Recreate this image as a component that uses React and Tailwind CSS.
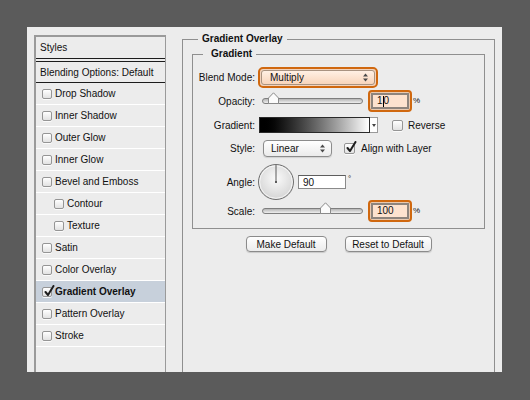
import React from 'react';

const styleItems = [
    { label: 'Drop Shadow' },
    { label: 'Inner Shadow' },
    { label: 'Outer Glow' },
    { label: 'Inner Glow' },
    { label: 'Bevel and Emboss' },
    { label: 'Contour', indent: true },
    { label: 'Texture', indent: true },
    { label: 'Satin' },
    { label: 'Color Overlay' },
    { label: 'Gradient Overlay', checked: true, active: true },
    { label: 'Pattern Overlay' },
    { label: 'Stroke' }
];

const Checkbox = ({ checked, size = 'w-[10px] h-[10px]' }) => (
    <span className={`relative shrink-0 ${size} rounded-[2px] border border-[#959595] bg-gradient-to-b from-white to-[#e2e2e2] shadow-[0_1px_0_rgba(255,255,255,0.8)]`}>
        {checked && (
            <svg className="absolute left-[1px] top-[-3px]" width="11" height="12" viewBox="0 0 11 12">
                <path d="M1.5 7 L4 10 L9.5 1" fill="none" stroke="#1e1e1e" strokeWidth="2" strokeLinecap="round" strokeLinejoin="round" />
            </svg>
        )}
    </span>
);

const UpDown = () => (
    <svg width="5" height="9" viewBox="0 0 5 9">
        <path d="M0 3.5 L2.5 0.5 L5 3.5 Z" fill="#4a4a4a" />
        <path d="M0 5.5 L2.5 8.5 L5 5.5 Z" fill="#4a4a4a" />
    </svg>
);

const Slider = ({ thumb }) => (
    <div className="relative w-[101px] h-[22px] flex items-center">
        <div className="w-full h-[6px] mt-[-1px] rounded-full border border-[#7e7e7e] bg-gradient-to-b from-[#b5b5b5] to-[#efefef]" />
        <svg className="absolute top-[2px]" style={{ left: thumb }} width="11" height="12" viewBox="0 0 11 12">
            <path d="M0.5 6 L5.5 0.8 L10.5 6 L10.5 11.5 L0.5 11.5 Z" fill="#fbfbfb" stroke="#8a8a8a" strokeWidth="1" />
        </svg>
    </div>
);

const FocusInput = ({ children }) => (
    <div className="flex items-center">
        <div className="w-[44px] h-[22px] rounded-[4px] border-2 border-[#d0680f] p-[1px] bg-[#e9c9b0]">
            <div className="h-full border-2 border-[#8e847d] bg-[#fde2cf] flex items-center pl-[4px] text-[10px] leading-none">
                {children}
            </div>
        </div>
        <span className="text-[8px] ml-[1px] mt-[-1px]">%</span>
    </div>
);

const Label = ({ children }) => (
    <div className="w-[62px] text-right shrink-0 text-[10px] leading-none pt-[1px]">{children}</div>
);

const App = () => {
    return (
        <div className="w-[530px] h-[400px] bg-[#5b5b5b] pt-[27px] pl-[27px] font-[family-name:'Liberation_Sans',Arial,sans-serif] text-[#111]">
            <div className="w-[475px] h-[345px] bg-[#ececec] overflow-hidden flex items-start">
                {/* styles list */}
                <div className="ml-[7px] mt-[8px] w-[132px] h-[360px] shrink-0 border-l-2 border-t-2 border-r border-[#9a9a9a] text-[10px]">
                    <div className="h-[22px] flex items-center pl-[4px] border-b border-[#1c1c1c]">Styles</div>
                    <div className="h-[22px] flex items-center pl-[4px] border-t border-b border-[#1c1c1c] mt-[2px]">Blending Options: Default</div>
                    {styleItems.map((item, index) => (
                        <div
                            key={index}
                            className={`h-[22px] flex items-center gap-[3px] border-b border-white ${item.indent ? 'pl-[18px]' : 'pl-[6px]'} ${item.active ? 'bg-[#c7d0db] font-bold' : ''}`}
                        >
                            <Checkbox checked={item.checked} />
                            <span>{item.label}</span>
                        </div>
                    ))}
                </div>

                {/* gradient overlay group */}
                <fieldset className="ml-[16px] mt-[6px] w-[313px] h-[380px] shrink-0 border border-[#8f8f8f]">
                    <legend className="ml-[15px] px-[4px] text-[10px] leading-[12px] font-bold">Gradient Overlay</legend>

                    <fieldset className="mx-[9px] mt-[3px] border border-[#8f8f8f] pt-[7px] pb-[6px]">
                        <legend className="ml-[10px] pl-[8px] pr-[4px] text-[10px] leading-[12px] font-bold">Gradient</legend>

                        <div className="h-[21px] flex items-center">
                            <Label>Blend Mode:</Label>
                            <div className="ml-[3px] w-[120px] h-[21px] rounded-[5px] border-2 border-[#d0680f] p-[1px] bg-[#f2d3bd]">
                                <div className="h-full rounded-[3px] border border-[#a99381] bg-gradient-to-b from-[#fff0e4] to-[#f8d5bb] flex items-center justify-between pl-[8px] pr-[6px] text-[10px]">
                                    <span>Multiply</span>
                                    <UpDown />
                                </div>
                            </div>
                        </div>

                        <div className="mt-[2px] h-[22px] flex items-center">
                            <Label>Opacity:</Label>
                            <div className="ml-[7px]"><Slider thumb={6} /></div>
                            <div className="ml-[5px]">
                                <FocusInput>
                                    <span>1</span>
                                    <span className="w-px h-[11px] bg-black" />
                                    <span>0</span>
                                </FocusInput>
                            </div>
                        </div>

                        <div className="mt-[5px] h-[16px] flex items-center">
                            <Label>Gradient:</Label>
                            <div className="ml-[4px] w-[111px] h-[16px] border border-[#2a2a2a] bg-gradient-to-r from-black to-white" />
                            <div className="w-[8px] h-[16px] border border-l-0 border-[#9a9a9a] bg-white flex items-center justify-center">
                                <svg width="4" height="3" viewBox="0 0 4 3"><path d="M0 0 L4 0 L2 3 Z" fill="#444" /></svg>
                            </div>
                            <div className="ml-[14px] flex items-center gap-[5px] text-[10px]">
                                <Checkbox size="w-[11px] h-[11px]" />
                                <span>Reverse</span>
                            </div>
                        </div>

                        <div className="mt-[7px] h-[17px] flex items-center">
                            <Label>Style:</Label>
                            <div className="ml-[8px] w-[69px] h-[17px] rounded-[4px] border border-[#8c8c8c] bg-gradient-to-b from-white to-[#ebebeb] flex items-center justify-between pl-[7px] pr-[6px] text-[10px] shadow-[0_1px_1px_rgba(0,0,0,0.12)]">
                                <span>Linear</span>
                                <UpDown />
                            </div>
                            <div className="ml-[12px] flex items-center gap-[6px] text-[10px]">
                                <Checkbox checked size="w-[11px] h-[11px]" />
                                <span>Align with Layer</span>
                            </div>
                        </div>

                        <div className="mt-[7px] h-[36px] flex items-center">
                            <Label>Angle:</Label>
                            <svg className="ml-[2px] shrink-0" width="38" height="38" viewBox="0 0 38 38">
                                <defs>
                                    <radialGradient id="dial" cx="50%" cy="40%" r="60%">
                                        <stop offset="0%" stopColor="#fafafa" />
                                        <stop offset="100%" stopColor="#d4d4d4" />
                                    </radialGradient>
                                </defs>
                                <circle cx="19" cy="19" r="17.5" fill="url(#dial)" stroke="#6e6e6e" strokeWidth="1" />
                                <circle cx="19" cy="19" r="16.3" fill="none" stroke="#ffffff" strokeOpacity="0.7" strokeWidth="1" />
                                <line x1="19" y1="19" x2="19" y2="2" stroke="#5a5a5a" strokeWidth="1" />
                                <rect x="18" y="18" width="2" height="2" fill="#5a5a5a" />
                            </svg>
                            <div className="ml-[3px] w-[48px] h-[14px] border border-[#8a8a8a] border-t-[#5e5e5e] bg-white flex items-center pl-[4px] text-[10px]">90</div>
                            <span className="text-[8px] self-start mt-[9px] ml-[2px]">°</span>
                        </div>

                        <div className="h-[22px] flex items-center">
                            <Label>Scale:</Label>
                            <div className="ml-[7px]"><Slider thumb={58} /></div>
                            <div className="ml-[5px]">
                                <FocusInput>100</FocusInput>
                            </div>
                        </div>
                    </fieldset>

                    <div className="mt-[7px] flex justify-center gap-[18px] text-[10px]">
                        <div className="w-[81px] h-[16px] rounded-[4px] border border-[#8b8b8b] bg-gradient-to-b from-white to-[#ececec] flex items-center justify-center shadow-[0_1px_1px_rgba(0,0,0,0.15)]">Make Default</div>
                        <div className="w-[87px] h-[16px] rounded-[4px] border border-[#8b8b8b] bg-gradient-to-b from-white to-[#ececec] flex items-center justify-center shadow-[0_1px_1px_rgba(0,0,0,0.15)]">Reset to Default</div>
                    </div>
                </fieldset>
            </div>
        </div>
    );
};

export default App;
